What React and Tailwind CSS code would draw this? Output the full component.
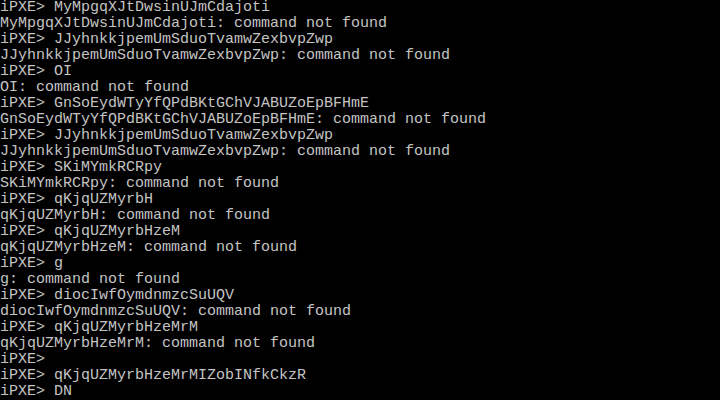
import React from "react";

const lines = [
  "iPXE> MyMpgqXJtDwsinUJmCdajoti",
  "MyMpgqXJtDwsinUJmCdajoti: command not found",
  "iPXE> JJyhnkkjpemUmSduoTvamwZexbvpZwp",
  "JJyhnkkjpemUmSduoTvamwZexbvpZwp: command not found",
  "iPXE> OI",
  "OI: command not found",
  "iPXE> GnSoEydWTyYfQPdBKtGChVJABUZoEpBFHmE",
  "GnSoEydWTyYfQPdBKtGChVJABUZoEpBFHmE: command not found",
  "iPXE> JJyhnkkjpemUmSduoTvamwZexbvpZwp",
  "JJyhnkkjpemUmSduoTvamwZexbvpZwp: command not found",
  "iPXE> SKiMYmkRCRpy",
  "SKiMYmkRCRpy: command not found",
  "iPXE> qKjqUZMyrbH",
  "qKjqUZMyrbH: command not found",
  "iPXE> qKjqUZMyrbHzeM",
  "qKjqUZMyrbHzeM: command not found",
  "iPXE> g",
  "g: command not found",
  "iPXE> diocIwfOymdnmzcSuUQV",
  "diocIwfOymdnmzcSuUQV: command not found",
  "iPXE> qKjqUZMyrbHzeMrM",
  "qKjqUZMyrbHzeMrM: command not found",
  "iPXE>",
  "iPXE> qKjqUZMyrbHzeMrMIZobINfkCkzR",
  "iPXE> DN",
];

export default function App() {
  return (
    <div className="w-[720px] h-[400px] bg-black overflow-hidden">
      <div className="flex flex-col font-['Liberation_Mono',monospace] text-[15px] leading-[16px] text-[#c4c4c4]">
        {lines.map((l, i) => (
          <div key={i} className="h-[16px] whitespace-pre">
            {l}
          </div>
        ))}
      </div>
    </div>
  );
}
